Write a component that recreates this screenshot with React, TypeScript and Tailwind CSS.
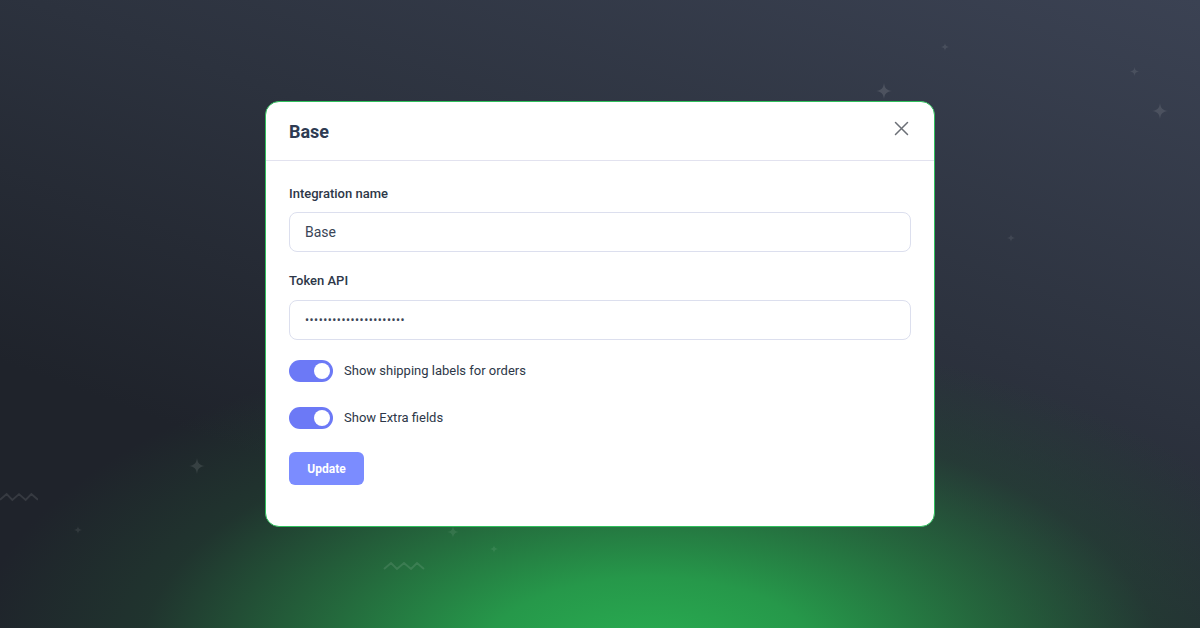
import React, { useState } from 'react';

const Sparkle = ({ x, y, size, opacity = 0.12 }: { x: number; y: number; size: number; opacity?: number }) => (
  <svg
    className="absolute"
    style={{ left: x - size / 2, top: y - size / 2, opacity }}
    width={size}
    height={size}
    viewBox="0 0 24 24"
    fill="#ffffff"
  >
    <path d="M12 0 C13 8 16 11 24 12 C16 13 13 16 12 24 C11 16 8 13 0 12 C8 11 11 8 12 0 Z" />
  </svg>
);

const Zigzag = ({ x, y, w }: { x: number; y: number; w: number }) => (
  <svg
    className="absolute opacity-10"
    style={{ left: x, top: y }}
    width={w}
    height={10}
    viewBox="0 0 40 10"
    fill="none"
    stroke="#ffffff"
    strokeWidth="2"
  >
    <path d="M0 8 L7 2 L13 8 L20 2 L27 8 L33 2 L40 8" />
  </svg>
);

const Toggle = ({ on, onChange }: { on: boolean; onChange: () => void }) => (
  <button
    onClick={onChange}
    className={`relative w-[44px] h-[22px] rounded-full flex items-center px-[3px] ${
      on ? 'bg-[#6c79f6] justify-end' : 'bg-gray-300 justify-start'
    }`}
  >
    <span className="block w-[16px] h-[16px] rounded-full bg-white" />
  </button>
);

export default function App() {
  const [labels, setLabels] = useState(true);
  const [extra, setExtra] = useState(true);

  return (
    <div
      className="relative w-[1200px] h-[628px] overflow-hidden flex items-start justify-center bg-[#262b35]"
      style={{ fontFamily: 'Roboto, "Noto Sans", sans-serif' }}
    >
      {/* background gradients */}
      <div className="absolute inset-0 bg-[linear-gradient(200deg,#3b4253_0%,#2c323e_40%,#1f232b_75%)]" />
      <div className="absolute inset-0 bg-[radial-gradient(ellipse_680px_330px_at_650px_660px,#29b052_0%,#26984a_25%,rgba(37,120,64,0.78)_50%,rgba(34,80,52,0.38)_75%,rgba(31,35,43,0)_100%)]" />

      {/* decorations */}
      <Sparkle x={884} y={91} size={16} />
      <Sparkle x={945} y={47} size={8} opacity={0.09} />
      <Sparkle x={1134} y={71} size={9} opacity={0.09} />
      <Sparkle x={1160} y={111} size={16} opacity={0.1} />
      <Sparkle x={1011} y={238} size={8} opacity={0.08} />
      <Sparkle x={197} y={466} size={16} opacity={0.1} />
      <Sparkle x={78} y={530} size={8} opacity={0.08} />
      <Sparkle x={453} y={532} size={12} opacity={0.08} />
      <Sparkle x={494} y={549} size={8} opacity={0.08} />
      <Zigzag x={0} y={492} w={38} />
      <Zigzag x={383} y={561} w={42} />

      {/* modal */}
      <div className="relative mt-[101px] w-[670px] h-[426px] bg-white rounded-[14px] border border-[#2fbf5c]">
        <div className="h-[59px] px-[23px] flex items-center justify-between border-b border-[#e2e2ef]">
          <h2 className="text-[18px] font-bold text-[#2e3b52]">Base</h2>
          <button className="text-[#6b6f76] mr-[2px] -mt-[5px]">
            <svg width="15" height="15" viewBox="0 0 15 15" fill="none" stroke="currentColor" strokeWidth="1.5" strokeLinecap="round">
              <path d="M1.5 1.5 L13.5 13.5 M13.5 1.5 L1.5 13.5" />
            </svg>
          </button>
        </div>

        <div className="px-[23px] pt-[24px] flex flex-col">
          <label className="text-[13px] font-medium text-[#2d3748] leading-[18px]">Integration name</label>
          <div className="mt-[9px] h-[40px] rounded-[8px] border border-[#dcdfee] flex items-center px-[15px]">
            <span className="text-[14px] text-[#3a4556]">Base</span>
          </div>

          <label className="mt-[20px] text-[13px] font-medium text-[#2d3748] leading-[18px]">Token API</label>
          <div className="mt-[10px] h-[40px] rounded-[8px] border border-[#dcdfee] flex items-center px-[15px]">
            <span className="text-[12px] tracking-[0.5px] text-[#3a4556] leading-none">••••••••••••••••••••••</span>
          </div>

          <div className="mt-[20px] flex items-center gap-[11px]">
            <Toggle on={labels} onChange={() => setLabels(!labels)} />
            <span className="text-[13px] text-[#2d3748]">Show shipping labels for orders</span>
          </div>

          <div className="mt-[25px] flex items-center gap-[11px]">
            <Toggle on={extra} onChange={() => setExtra(!extra)} />
            <span className="text-[13px] text-[#2d3748]">Show Extra fields</span>
          </div>

          <div className="mt-[23px]">
            <button className="w-[75px] h-[33px] rounded-[6px] bg-[#7b8cff] text-white text-[12px] font-bold">
              Update
            </button>
          </div>
        </div>
      </div>
    </div>
  );
}
